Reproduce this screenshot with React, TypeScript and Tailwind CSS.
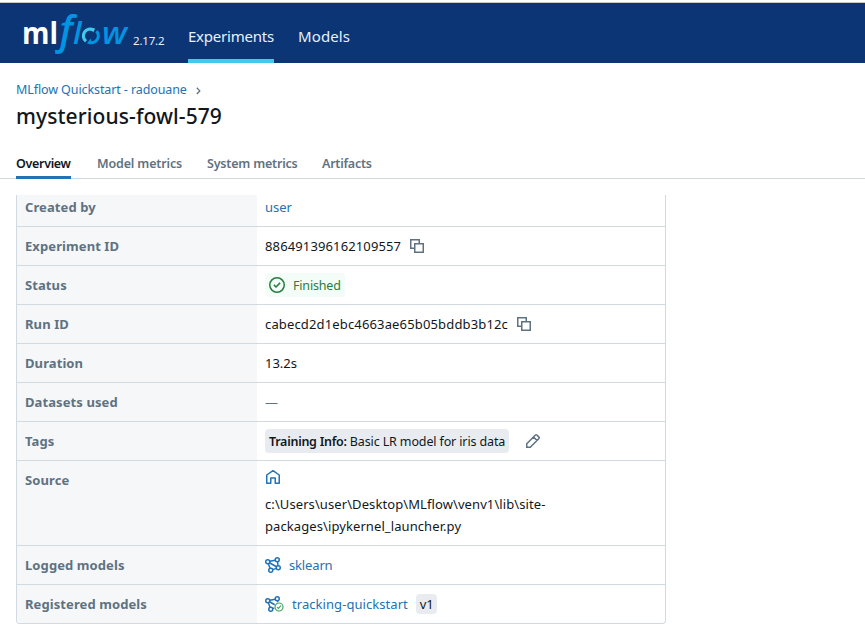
import type { ReactNode } from "react";

function Logo() {
  return (
    <svg width="106" height="46" viewBox="22 10 106 46" className="block overflow-visible" fontFamily="'Open Sans', 'Noto Sans', sans-serif">
      <text x="22" y="44" fontSize="30" fontWeight="700" fill="#fff" textLength="36" lengthAdjust="spacingAndGlyphs">ml</text>
      <g fill="#0194e2" fontStyle="italic">
        <text x="59.5" y="44" fontSize="39" fontWeight="600">f</text>
        <text x="73" y="44" fontSize="31" fontWeight="600">l</text>
        <text x="102" y="44" fontSize="30" fontWeight="600" textLength="25" lengthAdjust="spacingAndGlyphs">w</text>
      </g>
      <path d="M86 41.3A6.8 6.8 0 0 1 93.5 30" fill="none" stroke="#43c9ed" strokeWidth="3.2" />
      <path d="M91.2 28.2l4 .2-2 4z" fill="#43c9ed" />
      <path d="M96.4 31.2A6.8 6.8 0 0 1 88.5 42" fill="none" stroke="#0194e2" strokeWidth="3.2" />
      <path d="M86.8 43.5l4-5 .8 5.3z" fill="#0194e2" />
    </svg>
  );
}

function CopyIcon() {
  return (
    <svg width="16" height="16" viewBox="0 0 16 16" fill="none" stroke="#5f7281" strokeWidth="1.5">
      <path d="M5 10.25H1.75v-8.5h8.5V5" />
      <path d="M5.75 5.75h8.5v8.5h-8.5z" />
    </svg>
  );
}

function CheckCircle() {
  return (
    <svg width="16" height="16" viewBox="0 0 16 16" fill="none" stroke="#277c43" strokeWidth="1.5">
      <circle cx="8" cy="8" r="7.25" />
      <path d="M4.9 7.9 7 10l4.1-4.1" />
    </svg>
  );
}

function Pencil() {
  return (
    <svg width="16" height="16" viewBox="0 0 16 16" fill="none" stroke="#5f7281" strokeWidth="1.5">
      <path d="M1.75 14.25v-3.5l8.7-8.7a1 1 0 0 1 1.4 0l2.1 2.1a1 1 0 0 1 0 1.4l-8.7 8.7zM8.5 4l3.5 3.5" />
    </svg>
  );
}

function Home() {
  return (
    <svg width="16" height="16" viewBox="0 0 16 16" fill="none" stroke="#2272b4" strokeWidth="1.5" strokeLinejoin="round">
      <path d="M1.75 6 8 1.7 14.25 6v8.25h-4V9h-4.5v5.25h-4z" />
    </svg>
  );
}

function ModelIcon({ checked }: { checked?: boolean }) {
  return (
    <svg width={checked ? 19 : 16} height="16" viewBox={checked ? "0 0 19 16" : "0 0 16 16"} fill="none" stroke="#2272b4" strokeWidth="1.5">
      <circle cx="2.75" cy="4.75" r="2" />
      <circle cx="12.25" cy="2.75" r="2" />
      <circle cx="5.75" cy="13.25" r="2" />
      <circle cx="13.25" cy="10.75" r="2" />
      <path d="M4.7 4.35 10.3 3.15M3.3 6.7l1.8 4.6M4.5 5.75l7 4M12.5 4.75l.5 4M7.5 12.6l3.9-1.2" />
      {checked && (
        <g stroke="#3ba65e" strokeWidth="1.2">
          <circle cx="14" cy="11" r="4.9" fill="#fff" stroke="none" />
          <circle cx="14" cy="11" r="4" />
          <path d="m12.1 11.1 1.3 1.3 2.6-2.7" />
        </g>
      )}
    </svg>
  );
}

function Row({ label, tall, children }: { label: string; tall?: boolean; children: ReactNode }) {
  return (
    <div className={`flex border-b border-[#d1d9e1] last:h-[38px] last:border-b-0 ${tall ? "h-[85px]" : "h-[39px]"}`}>
      <div className="w-60 shrink-0 bg-[#f6f7f9] px-2 pt-[9px] font-bold leading-5 tracking-[0.09px] text-[#5f7281]">{label}</div>
      <div className={`flex min-w-0 flex-1 px-2 ${tall ? "flex-col pt-2" : "items-center"}`}>{children}</div>
    </div>
  );
}

export default function App() {
  return (
    <div className="flex h-[635px] w-[865px] flex-col overflow-hidden bg-white font-['Noto_Sans','Open_Sans',sans-serif] text-[13px] leading-5 text-[#11171c]">
      <header className="mt-0.5 flex h-[61px] shrink-0 border-t border-[#c9c9c9] bg-[#0b3574] pl-[22px] text-[#e7f1fb]">
        <div className="pt-[7px]"><Logo /></div>
        <span className="ml-[5px] w-[55px] pt-7 text-[11.5px] leading-5 tracking-[-0.2px]">2.17.2</span>
        <nav className="flex gap-6 text-[15px] tracking-[-0.22px]">
          <a className="h-[60px] w-[86px] border-b-4 border-[#43c9ed] pt-[23px]">Experiments</a>
          <a className="pt-[23px] tracking-[0.1px]">Models</a>
        </nav>
      </header>

      <div className="flex h-[132px] shrink-0 flex-col">
        <div className="flex h-9 items-center px-4 pt-[17px] text-[12.5px] tracking-[-0.1px] text-[#2272b4]">
          <span>MLflow Quickstart - radouane</span>
          <svg width="5" height="8" viewBox="0 0 5 8" className="ml-[9px] mt-0.5" fill="none" stroke="#5f7281" strokeWidth="1.3"><path d="m.8.8 3 3.1-3 3.1" /></svg>
        </div>
        <h1 className="mt-[3px] px-4 text-[21px] font-medium leading-7 tracking-[0.1px]">mysterious-fowl-579</h1>
        <nav className="mt-[23px] flex h-[26px] gap-[26px] border-b border-[#d1d9e1] pl-4 text-[12.5px] font-semibold tracking-[-0.2px] text-[#5f7281]">
          <a className="-mb-px h-[26px] w-[55px] border-b-[3px] border-[#2272b4] pt-px tracking-[-0.32px] text-[#11171c]">Overview</a>
          <a className="w-[84px] whitespace-nowrap pt-px tracking-[-0.15px]">Model metrics</a>
          <a className="w-[89px] whitespace-nowrap pt-px">System metrics</a>
          <a className="pt-px tracking-[-0.25px]">Artifacts</a>
        </nav>
      </div>

      <main className="h-[429px] shrink-0 overflow-hidden pl-4">
        <div className="-mt-[7px] w-[650px] overflow-hidden rounded-b border border-[#d1d9e1] border-t-0">
          <Row label="Created by"><a className="text-[#2272b4]">user</a></Row>
          <Row label="Experiment ID">
            <span className="tracking-[0.13px]">886491396162109557</span>
            <span className="ml-2"><CopyIcon /></span>
          </Row>
          <Row label="Status">
            <span className="flex h-6 items-center gap-2 rounded bg-[#f3fcf6] px-1 text-[12.5px] tracking-[-0.18px] text-[#277c43]"><CheckCircle /><span className="pt-px">Finished</span></span>
          </Row>
          <Row label="Run ID">
            <span className="tracking-[0.15px]">cabecd2d1ebc4663ae65b05bddb3b12c</span>
            <span className="ml-2"><CopyIcon /></span>
          </Row>
          <Row label="Duration">13.2s</Row>
          <Row label="Datasets used"><span className="text-[#5f7281]">—</span></Row>
          <Row label="Tags">
            <span className="flex h-6 w-[244px] items-center whitespace-pre rounded bg-[#e8ecf0] px-1 pt-px text-[12.5px] tracking-[-0.13px]"><b className="font-semibold tracking-[-0.27px]">Training Info:</b> Basic LR model for iris data</span>
            <span className="ml-4"><Pencil /></span>
          </Row>
          <Row label="Source" tall>
            <Home />
            <p className="mt-2 leading-[22px] tracking-[0.09px]">c:\Users\user\Desktop\MLflow\venv1\lib\site-<br />packages\ipykernel_launcher.py</p>
          </Row>
          <Row label="Logged models">
            <ModelIcon />
            <a className="ml-2 tracking-[-0.15px] text-[#2272b4]">sklearn</a>
          </Row>
          <Row label="Registered models">
            <ModelIcon checked />
            <a className="ml-2 tracking-[0.06px] text-[#2272b4]">tracking-quickstart</a>
            <span className="ml-2 rounded bg-[#e8ecf0] px-1 tracking-[-0.3px]">v1</span>
          </Row>
        </div>
      </main>
    </div>
  );
}
